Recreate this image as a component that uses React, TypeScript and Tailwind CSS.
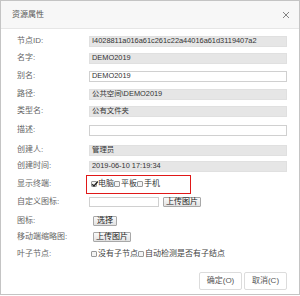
import React from "react";

const font = { fontFamily: '"Liberation Sans", "Noto Sans CJK SC", sans-serif' };

function Input({ value, disabled }: { value?: string; disabled?: boolean }) {
  return (
    <div
      className={
        "w-[198px] h-[11px] border flex items-center pl-[2px] text-[7.4px] leading-none text-[#333] whitespace-nowrap overflow-hidden " +
        (disabled ? "bg-[#e6e6e6] border-[#e0e0e0]" : "bg-white border-[#d0d0d0]")
      }
    >
      {value}
    </div>
  );
}

function Box({ checked }: { checked?: boolean }) {
  return (
    <span className="relative inline-block w-[6px] h-[6px] border border-[#999] bg-[#f4f4f4] rounded-[1px] mr-[1px]">
      {checked && (
        <svg className="absolute left-[-1px] top-[-2px]" width="8" height="8" viewBox="0 0 8 8">
          <path d="M1.2 4.2 L3 6 L6.8 1.5" fill="none" stroke="#222" strokeWidth="1.3" />
        </svg>
      )}
    </span>
  );
}

function Btn({ children, w }: { children: React.ReactNode; w: string }) {
  return (
    <div
      className={
        w +
        " h-[10px] border border-[#a8a8a8] rounded-[1px] bg-gradient-to-b from-[#fafafa] to-[#e2e2e2] flex items-center justify-center text-[8px] leading-none text-[#222]"
      }
    >
      {children}
    </div>
  );
}

function Row({ label, h, children }: { label: string; h: string; children?: React.ReactNode }) {
  return (
    <div className={"flex items-center pl-[16px] " + h}>
      <div className="w-[72px] text-[8px] leading-none text-[#666]">{label}</div>
      {children}
    </div>
  );
}

export default function App() {
  return (
    <div className="w-[300px] h-[296px] bg-white" style={font}>
      <div className="w-[300px] h-[295px] border border-[#c4c4c4] flex flex-col">
        <div className="h-[28px] bg-[#f7f7f7] border-b border-[#e6e6e6] flex items-center justify-between pl-[11px] pr-[9px]">
          <span className="text-[8px] leading-none text-[#555]">资源属性</span>
          <svg width="8" height="8" viewBox="0 0 8 8">
            <path d="M1 1 L7 7 M7 1 L1 7" stroke="#666" strokeWidth="0.8" />
          </svg>
        </div>
        <div className="flex flex-col pt-[4px]">
          <Row label="节点ID:" h="h-[16px]">
            <Input disabled value="I4028811a016a61c261c22a44016a61d3119407a2" />
          </Row>
          <Row label="名字:" h="h-[18px]">
            <Input disabled value="DEMO2019" />
          </Row>
          <Row label="别名:" h="h-[18px]">
            <Input value="DEMO2019" />
          </Row>
          <Row label="路径:" h="h-[18px]">
            <Input disabled value="公共空间\DEMO2019" />
          </Row>
          <Row label="类型名:" h="h-[16px]">
            <Input disabled value="公有文件夹" />
          </Row>
          <Row label="描述:" h="h-[22px]">
            <Input value="" />
          </Row>
          <Row label="创建人:" h="h-[18px]">
            <Input disabled value="管理员" />
          </Row>
          <Row label="创建时间:" h="h-[14px]">
            <Input disabled value="2019-06-10 17:19:34" />
          </Row>
          <div className="flex items-center pl-[16px] h-[22px]">
            <div className="w-[69px] text-[8px] leading-none text-[#666]">显示终端:</div>
            <div className="w-[105px] h-[19px] border border-[#e01818] flex items-center pl-[4px] text-[8px] leading-none text-[#333]">
              <Box checked />
              <span>电脑</span>
              <Box />
              <span>平板</span>
              <Box />
              <span>手机</span>
            </div>
          </div>
          <Row label="自定义图标:" h="h-[14px]">
            <div className="w-[70px] h-[10px] border border-[#d0d0d0] bg-white" />
            <div className="ml-[4px]">
              <Btn w="w-[38px]">上传图片</Btn>
            </div>
          </Row>
          <Row label="图标:" h="h-[24px]">
            <div className="ml-[4px]">
              <Btn w="w-[24px]">选择</Btn>
            </div>
          </Row>
          <Row label="移动端缩略图:" h="h-[8px]">
            <div className="ml-[4px]">
              <Btn w="w-[38px]">上传图片</Btn>
            </div>
          </Row>
          <Row label="叶子节点:" h="h-[26px]">
            <div className="flex items-center text-[8px] leading-none text-[#444] ml-[2px]">
              <Box />
              <span>没有子节点</span>
              <Box />
              <span>自动检测是否有子结点</span>
            </div>
          </Row>
        </div>
        <div className="flex justify-end gap-[2px] pr-[12px] mt-[5px]">
          <div className="w-[43px] h-[18px] border border-[#dcdcdc] rounded-[2px] bg-white flex items-center justify-center text-[8px] leading-none text-[#555]">
            确定(O)
          </div>
          <div className="w-[43px] h-[18px] border border-[#dcdcdc] rounded-[2px] bg-white flex items-center justify-center text-[8px] leading-none text-[#555]">
            取消(C)
          </div>
        </div>
      </div>
    </div>
  );
}
